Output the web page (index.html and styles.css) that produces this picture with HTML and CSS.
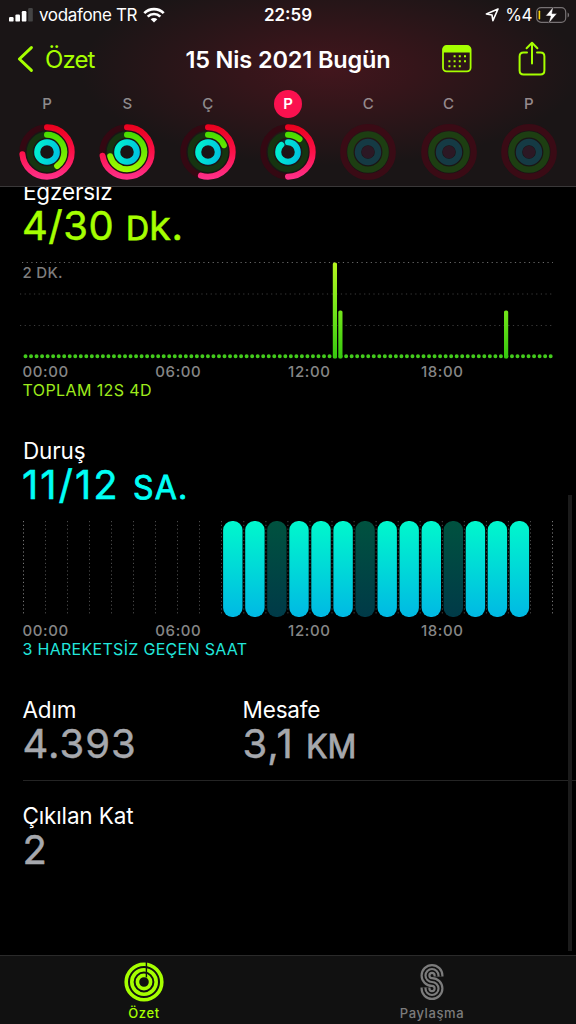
FILE: index.html
```html
<!DOCTYPE html>
<html lang="tr">
<head>
    <meta charset="utf-8">
    <title>Özet</title>
    <link rel="stylesheet" href="styles.css">
</head>
<body>

<svg class="defs" width="0" height="0">
    <defs>
        <!-- ring gradients run in the rotated space of .arcs circle -->
        <linearGradient id="moveGrad" gradientUnits="userSpaceOnUse" x1="58" y1="0" x2="0" y2="0">
            <stop offset="0" stop-color="#e8001a"/>
            <stop offset=".5" stop-color="#fb1148"/>
            <stop offset="1" stop-color="#ff3390"/>
        </linearGradient>
        <linearGradient id="exerciseGrad" gradientUnits="userSpaceOnUse" x1="50" y1="29" x2="8" y2="24">
            <stop offset="0" stop-color="#44dc00"/>
            <stop offset="1" stop-color="#a4fb00"/>
        </linearGradient>
        <linearGradient id="standGrad" gradientUnits="userSpaceOnUse" x1="32" y1="20" x2="26" y2="40">
            <stop offset="0" stop-color="#00ecd0"/>
            <stop offset="1" stop-color="#00c4e0"/>
        </linearGradient>
        <linearGradient id="minuteGrad" gradientUnits="userSpaceOnUse" x1="0" y1="17" x2="0" y2="113">
            <stop offset="0" stop-color="#b6f51e"/>
            <stop offset=".5" stop-color="#74e61a"/>
            <stop offset="1" stop-color="#36c80e"/>
        </linearGradient>
        <linearGradient id="hourGrad" x1="0" y1="0" x2="0" y2="1">
            <stop offset="0" stop-color="#00f8cc"/>
            <stop offset="1" stop-color="#00b9e4"/>
        </linearGradient>
        <linearGradient id="idleGrad" x1="0" y1="0" x2="0" y2="1">
            <stop offset="0" stop-color="#00523f"/>
            <stop offset="1" stop-color="#003a48"/>
        </linearGradient>
        <g id="tracks" fill="none" stroke-width="6">
            <circle cx="29" cy="29" r="24.7" stroke="#340812"/>
            <circle cx="29" cy="29" r="17.3" stroke="#153410"/>
            <circle cx="29" cy="29" r="9.8" stroke="#0b3540"/>
        </g>
        <g id="emptyRings" fill="none" stroke-width="6.4">
            <circle cx="29" cy="29" r="24.7" stroke="#3a0b15"/>
            <circle cx="29" cy="29" r="17.6" stroke="#1d3e12"/>
            <circle cx="29" cy="29" r="10" stroke="#153a44"/>
            <circle cx="29" cy="29" r="6.3" fill="#2c1824" stroke="none"/>
        </g>
    </defs>
</svg>

<header class="header">
    <div class="status">
        <div class="status-left">
            <svg width="24" height="14" viewBox="0 0 24 14">
                <rect x="0" y="9" width="4.6" height="4.6" rx="1.2" fill="#fff"/>
                <rect x="6.4" y="6.4" width="4.6" height="7.2" rx="1.2" fill="#fff"/>
                <rect x="12.8" y="3" width="4.6" height="10.6" rx="1.2" fill="#fff"/>
                <rect x="19.2" y="0" width="4.6" height="13.6" rx="1.2" fill="#444"/>
            </svg>
            <span class="carrier">vodafone TR</span>
            <svg width="22" height="16" viewBox="0 0 22 16" fill="none" stroke="#fff" stroke-width="2.7">
                <path d="M1.3 6.1a13.7 13.7 0 0 1 19.4 0"/>
                <path d="M4.7 9.6a8.9 8.9 0 0 1 12.6 0"/>
                <path d="M11 15.6l-3.3-3.3a4.7 4.7 0 0 1 6.6 0z" fill="#fff" stroke="none"/>
            </svg>
        </div>
        <div class="clock">22:59</div>
        <div class="status-right">
            <svg width="14" height="14" viewBox="0 0 14 14" fill="none" stroke="#fff" stroke-width="1.6" stroke-linejoin="round">
                <path d="M13 1L1.4 6l5.6 1 .9 5.6z"/>
            </svg>
            <span class="percent">%4</span>
            <svg width="34" height="18" viewBox="0 0 34 18">
                <rect x=".7" y="1.7" width="29" height="14.6" rx="4.4" fill="none" stroke="#777274" stroke-width="1.2"/>
                <path d="M31.6 6.5v5c2-.8 2-4.2 0-5z" fill="#777274"/>
                <rect x="2.6" y="4.4" width="1.6" height="9.2" rx=".8" fill="#ffd60a"/>
                <path d="M17.4.8L9.6 10h5l-2 7.4L21 7.6h-5z" fill="#fff" stroke="#1d1416" stroke-width=".5"/>
            </svg>
        </div>
    </div>

    <nav class="nav">
        <a class="back">
            <svg width="18" height="28" viewBox="0 0 18 28" fill="none" stroke="#a6ff00" stroke-width="3" stroke-linecap="round" stroke-linejoin="round">
                <path d="M15.4 2.6L3.4 14l12 11.4"/>
            </svg>
            <span>Özet</span>
        </a>
        <h1 class="title">15 Nis 2021 Bugün</h1>
        <div class="actions">
            <svg width="30" height="28" viewBox="0 0 30 28">
                <rect x="1" y="1" width="27.6" height="25.4" rx="3.6" fill="none" stroke="#a6ff00" stroke-width="1.8"/>
                <path d="M1 7.4V4.2Q1 1 4.4 1h20.8q3.4 0 3.4 3.2v3.2z" fill="#a6ff00"/>
                <g stroke="#a6ff00" stroke-width="2" stroke-dasharray="2 3.2">
                    <path d="M11.6 11.2h13"/>
                    <path d="M6.4 16.2h18"/>
                    <path d="M6.4 21.2h13"/>
                </g>
            </svg>
            <svg width="28" height="36" viewBox="0 0 28 36" fill="none" stroke="#a6ff00" stroke-width="2" stroke-linecap="round" stroke-linejoin="round">
                <path d="M9 11.4H5.6Q1.6 11.4 1.6 15.4V29.6Q1.6 33.6 5.6 33.6H22.4Q26.4 33.6 26.4 29.6V15.4Q26.4 11.4 22.4 11.4H19"/>
                <path d="M14 22.4V2M8.6 7.2L14 1.8l5.4 5.4"/>
            </svg>
        </div>
    </nav>

    <div class="week">
        <div class="day">
            <span class="day-name">P</span>
            <svg class="rings" viewBox="0 0 58 58">
                <use href="#tracks"/>
                <g class="arcs">
                    <circle class="move" cx="29" cy="29" r="24.7" pathLength="100" stroke-dasharray="73.5 100"/>
                    <circle class="exercise" cx="29" cy="29" r="17.3" pathLength="100" stroke-dasharray="40 100"/>
                    <circle class="stand" cx="29" cy="29" r="9.8"/>
                </g>
            </svg>
        </div>
        <div class="day">
            <span class="day-name">S</span>
            <svg class="rings" viewBox="0 0 58 58">
                <use href="#tracks"/>
                <g class="arcs">
                    <circle class="move" cx="29" cy="29" r="24.7" pathLength="100" stroke-dasharray="72.5 100"/>
                    <circle class="exercise" cx="29" cy="29" r="17.3" pathLength="100" stroke-dasharray="71 100"/>
                    <circle class="stand" cx="29" cy="29" r="9.8"/>
                </g>
            </svg>
        </div>
        <div class="day">
            <span class="day-name">Ç</span>
            <svg class="rings" viewBox="0 0 58 58">
                <use href="#tracks"/>
                <g class="arcs">
                    <circle class="move" cx="29" cy="29" r="24.7" pathLength="100" stroke-dasharray="54.7 100"/>
                    <circle class="exercise" cx="29" cy="29" r="17.3" pathLength="100" stroke-dasharray="18.5 100"/>
                    <circle class="stand" cx="29" cy="29" r="9.8"/>
                </g>
            </svg>
        </div>
        <div class="day">
            <span class="day-name selected">P</span>
            <svg class="rings" viewBox="0 0 58 58">
                <use href="#tracks"/>
                <g class="arcs">
                    <circle class="move" cx="29" cy="29" r="24.7" pathLength="100" stroke-dasharray="50 100"/>
                    <circle class="exercise" cx="29" cy="29" r="17.3" pathLength="100" stroke-dasharray="11.6 100"/>
                    <circle class="stand" cx="29" cy="29" r="9.8" pathLength="100" stroke-dasharray="88 100"/>
                </g>
            </svg>
        </div>
        <div class="day">
            <span class="day-name future">C</span>
            <svg class="rings" viewBox="0 0 58 58"><use href="#emptyRings"/></svg>
        </div>
        <div class="day">
            <span class="day-name future">C</span>
            <svg class="rings" viewBox="0 0 58 58"><use href="#emptyRings"/></svg>
        </div>
        <div class="day">
            <span class="day-name future">P</span>
            <svg class="rings" viewBox="0 0 58 58"><use href="#emptyRings"/></svg>
        </div>
    </div>
</header>

<main class="content">
    <section class="metric">
        <h2 class="label">Egzersiz</h2>
        <div class="value green">4/30 <span class="unit">D</span>k.</div>
        <svg class="chart" viewBox="0 4 576 113.5">
            <g stroke-dasharray="1.2 3.45">
                <path d="M22 17.5H553" stroke="#6a6a6a"/>
                <path d="M20 49H553" stroke="#3c3c3c"/>
                <path d="M20 80.5H553" stroke="#3c3c3c"/>
            </g>
            <text class="scale" x="22.5" y="33">2 DK.</text>
            <path d="M25.5 111.3H551" stroke="#43cb1c" stroke-width="4" stroke-linecap="round" stroke-dasharray="0 5.528"/>
            <g fill="url(#minuteGrad)">
                <rect x="332.8" y="17.5" width="4.2" height="96" rx="1.6"/>
                <rect x="338.3" y="65.5" width="4.2" height="48" rx="1.6"/>
                <rect x="504" y="65.5" width="4.2" height="48" rx="1.6"/>
            </g>
        </svg>
        <div class="axis"><span>00:00</span><span>06:00</span><span>12:00</span><span>18:00</span></div>
        <div class="summary green">TOPLAM 12S 4D</div>
    </section>

    <section class="metric">
        <h2 class="label">Duruş</h2>
        <div class="value cyan">11/12 <span class="unit">SA.</span></div>
        <svg class="chart" viewBox="0 4 576 113.5">
            <g stroke="#4a4a4a" stroke-dasharray="1.2 2.6">
                <path d="M23.5 17v95" stroke="#777"/>
                <path d="M45.5 17v95M67.5 17v95M89.5 17v95M111.5 17v95M133.5 17v95M155.5 17v95M177.5 17v95M199.5 17v95M221.5 17v95"/>
                <path d="M243.8 17v95M265.9 17v95M287.9 17v95M310 17v95M332 17v95M354.1 17v95M376.1 17v95M398.2 17v95M420.2 17v95M442.3 17v95M464.3 17v95M486.4 17v95M508.4 17v95M530.5 17v95"/>
                <path d="M552.5 17v95" stroke="#777"/>
            </g>
            <g fill="url(#hourGrad)">
                <rect x="223.1" y="17" width="19.4" height="96" rx="9"/>
                <rect x="245.2" y="17" width="19.4" height="96" rx="9"/>
                <rect x="267.2" y="17" width="19.4" height="96" rx="9" fill="url(#idleGrad)"/>
                <rect x="289.3" y="17" width="19.4" height="96" rx="9"/>
                <rect x="311.3" y="17" width="19.4" height="96" rx="9"/>
                <rect x="333.4" y="17" width="19.4" height="96" rx="9"/>
                <rect x="355.4" y="17" width="19.4" height="96" rx="9" fill="url(#idleGrad)"/>
                <rect x="377.5" y="17" width="19.4" height="96" rx="9"/>
                <rect x="399.5" y="17" width="19.4" height="96" rx="9"/>
                <rect x="421.6" y="17" width="19.4" height="96" rx="9"/>
                <rect x="443.6" y="17" width="19.4" height="96" rx="9" fill="url(#idleGrad)"/>
                <rect x="465.7" y="17" width="19.4" height="96" rx="9"/>
                <rect x="487.7" y="17" width="19.4" height="96" rx="9"/>
                <rect x="509.7" y="17" width="19.4" height="96" rx="9"/>
            </g>
        </svg>
        <div class="axis"><span>00:00</span><span>06:00</span><span>12:00</span><span>18:00</span></div>
        <div class="summary cyan">3 HAREKETSİZ GEÇEN SAAT</div>
    </section>

    <section class="stats">
        <div class="stat">
            <h2 class="label">Adım</h2>
            <div class="value gray">4.393</div>
        </div>
        <div class="stat">
            <h2 class="label">Mesafe</h2>
            <div class="value gray">3,1 <span class="unit">KM</span></div>
        </div>
    </section>
    <section class="stats last">
        <div class="stat">
            <h2 class="label">Çıkılan Kat</h2>
            <div class="value gray">2</div>
        </div>
    </section>
    <div class="scrollbar"></div>
</main>

<footer class="tabs">
    <a class="tab active">
        <svg width="40" height="40" viewBox="0 0 40 40" fill="none" stroke="#a6ff00" stroke-width="3.6">
            <circle cx="20" cy="20" r="17.8"/>
            <circle cx="20" cy="20" r="12.2"/>
            <circle cx="20" cy="20" r="6.6"/>
            <path d="M22.4 0v15.4" stroke="#111" stroke-width="1.4"/>
        </svg>
        <span>Özet</span>
    </a>
    <a class="tab">
        <svg width="40" height="40" viewBox="-8.5 -1 40 40" fill="none">
            <path d="M18 13.5V12.5A6.5 6.5 0 1 0 11.5 19A6.5 6.5 0 1 1 5 25.5V24.5" stroke="#7c7c7c" stroke-width="10"/>
            <path d="M18 13.6V12.5A6.5 6.5 0 1 0 11.5 19A6.5 6.5 0 1 1 5 25.5V24.4" stroke="#111" stroke-width="5.6"/>
            <path d="M18 13.5V12.5A6.5 6.5 0 1 0 11.5 19A6.5 6.5 0 1 1 5 25.5V24.5" stroke="#7c7c7c" stroke-width="2.2"/>
        </svg>
        <span>Paylaşma</span>
    </a>
</footer>

</body>
</html>
```
FILE: styles.css
```css
html,body{
    margin: 0;
    padding: 0;
}

body{
    display: flex;
    flex-direction: column;
    width: 576px;
    height: 1024px;
    overflow: hidden;
    background: #000;
    color: #fff;
    font-family: Inter, "Liberation Sans", sans-serif;
    cursor: default;
}

svg{
    display: block;
    flex: none;
}
.defs{
    position: absolute;
}

h1,h2{
    margin: 0;
    font-weight: 400;
}

/* header */
.header{
    box-sizing: border-box;
    flex: none;
    height: 187px;
    border-bottom: 1px solid #3a3839;
    background: radial-gradient(ellipse 250px 95px at 330px 70px, #42161d 0%, #35151a 35%, #1a1516 100%);
}

.status{
    display: grid;
    grid-template-columns: 1fr auto 1fr;
    align-items: center;
    height: 30px;
    padding: 0 6px 0 9px;
    font-size: 17px;
}
.status-left,
.status-right{
    display: flex;
    align-items: center;
}
.status-right{
    justify-content: flex-end;
}
.carrier{
    margin: 0 6px 0 6px;
    letter-spacing: -.35px;
}
.clock{
    margin-right: 3px;
    font-weight: 600;
}
.percent{
    margin: 0 4px 0 6px;
    letter-spacing: -.4px;
}

.nav{
    display: grid;
    grid-template-columns: 1fr auto 1fr;
    align-items: center;
    height: 58px;
    padding: 0 30px;
}
.back{
    display: flex;
    align-items: center;
    gap: 11px;
    margin-left: -14px;
    color: #a6ff00;
    font-size: 24px;
    letter-spacing: -.9px;
}
.title{
    font-size: 23.5px;
    font-weight: 600;
    letter-spacing: -.13px;
}
.actions{
    display: flex;
    align-items: center;
    justify-content: flex-end;
    gap: 46px;
}

.week{
    display: grid;
    grid-template-columns: repeat(7, 1fr);
    padding: 2px 7px 0;
}
.day{
    display: flex;
    flex-direction: column;
    align-items: center;
}
.day-name{
    width: 28px;
    height: 28px;
    line-height: 28px;
    border-radius: 50%;
    text-align: center;
    font-size: 15px;
    font-weight: 500;
    color: #8e8b8d;
}
.day-name.future{
    color: #96898c;
}
.day-name.selected{
    background: #fa114f;
    color: #fff;
    font-weight: 600;
}
.rings{
    width: 58px;
    height: 58px;
    margin-top: 5px;
}
.arcs circle{
    fill: none;
    stroke-width: 6;
    stroke-linecap: round;
    transform: rotate(-90deg);
    transform-origin: 29px 29px;
}
.arcs .move{ stroke: url(#moveGrad); }
.arcs .exercise{ stroke: url(#exerciseGrad); }
.arcs .stand{ stroke: url(#standGrad); }

/* metrics */
.content{
    position: relative;
    flex: 1;
    min-height: 0;
    overflow: hidden;
}
.metric{
    height: 259px;
}
.metric:first-child{
    margin-top: -9px;
}
.label{
    padding-left: 23px;
    font-size: 22.5px;
    line-height: 28px;
    letter-spacing: -.15px;
}
.value{
    padding-left: 22px;
    font-size: 40px;
    line-height: 40px;
    letter-spacing: 1px;
    white-space: pre;
    -webkit-text-stroke: .5px currentColor;
}
.unit{
    font-size: 32px;
    letter-spacing: 0;
    -webkit-text-stroke: .8px currentColor;
}
.green{ color: #a6ff00; }
.cyan{ color: #00fff6; }
.gray{ color: #a6a8ad; }

.value.green{ letter-spacing: .5px; }
.value.cyan{ letter-spacing: 2px; }
.value.cyan .unit{ letter-spacing: 1.3px; }

.chart{
    width: 576px;
    height: 113.5px;
}
.scale{
    fill: #7e7e7e;
    font-size: 15px;
    font-weight: 500;
    letter-spacing: .3px;
}
.axis{
    display: grid;
    grid-template-columns: repeat(4, 132.8px);
    padding-left: 22.5px;
    color: #868686;
    font-size: 15px;
    font-weight: 500;
    line-height: 18px;
    letter-spacing: .6px;
}
.summary{
    padding-left: 22.5px;
    font-size: 16px;
    line-height: 19px;
    letter-spacing: .3px;
}
.summary.green{
    color: #9eea1c;
    letter-spacing: .4px;
}
.summary.cyan{ color: #22e6dc; }

.stats{
    display: grid;
    grid-template-columns: 220px 1fr;
    margin-left: 22.5px;
    padding-bottom: 13px;
    border-bottom: 1px solid #242424;
}
.stats.last{
    padding-top: 21px;
    border-bottom: none;
}
.stat .label,
.stat .value{
    padding-left: 0;
}

.scrollbar{
    position: absolute;
    right: 4px;
    top: 308px;
    width: 4px;
    height: 456px;
    background: #1b1b1b;
}

/* tab bar */
.tabs{
    box-sizing: border-box;
    flex: none;
    display: grid;
    grid-template-columns: 1fr 1fr;
    height: 69px;
    border-top: 1px solid #2a2a2a;
    background: #111;
}
.tab{
    display: flex;
    flex-direction: column;
    align-items: center;
    padding-top: 6px;
    color: #7c7c7c;
    font-size: 13px;
    font-weight: 500;
    line-height: 22px;
    letter-spacing: .6px;
}
.tab.active{
    color: #a6ff00;
}
```
